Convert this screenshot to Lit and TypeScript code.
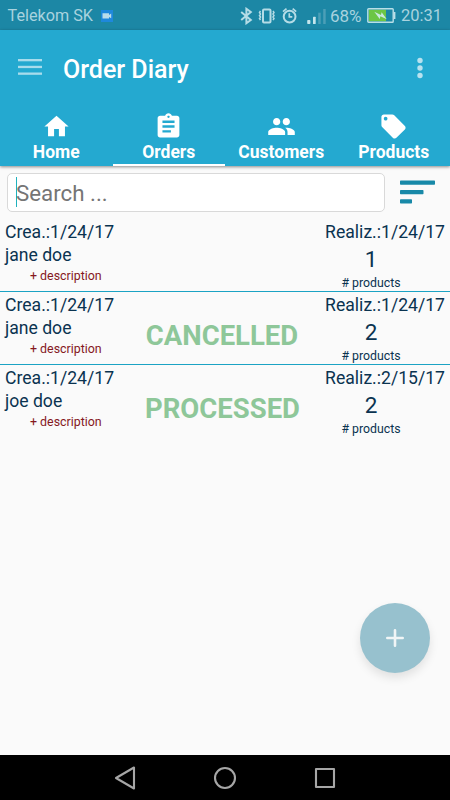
import { LitElement, html, css, svg, nothing } from "lit";
import { customElement, property } from "lit/decorators.js";
import { classMap } from "lit/directives/class-map.js";

interface Order {
  created: string;
  customer: string;
  due: string;
  products: number;
  status?: string;
}

const ORDERS: Order[] = [
  { created: "1/24/17", customer: "jane doe", due: "1/24/17", products: 1 },
  { created: "1/24/17", customer: "jane doe", due: "1/24/17", products: 2, status: "CANCELLED" },
  { created: "1/24/17", customer: "joe doe", due: "2/15/17", products: 2, status: "PROCESSED" },
];

const TABS = [
  { label: "Home", icon: "M10 20v-6h4v6h5v-8h3L12 3 2 12h3v8z" },
  {
    label: "Orders",
    icon: "M19 3h-4.180C14.400 1.840 13.300 1 12 1c-1.300 0-2.400.84-2.820 2H5c-1.100 0-2 .9-2 2v14c0 1.100.9 2 2 2h14c1.100 0 2-.9 2-2V5c0-1.100-.9-2-2-2zm-7 0c.55 0 1 .45 1 1s-.45 1-1 1-1-.45-1-1 .45-1 1-1zm2 14H7v-2h7v2zm3-4H7v-2h10v2zm0-4H7V7h10v2z",
  },
  {
    label: "Customers",
    icon: "M16 11c1.660 0 2.990-1.340 2.990-3S17.660 5 16 5c-1.660 0-3 1.340-3 3s1.340 3 3 3zm-8 0c1.660 0 2.990-1.340 2.990-3S9.660 5 8 5C6.340 5 5 6.340 5 8s1.340 3 3 3zm0 2c-2.330 0-7 1.170-7 3.500V19h14v-2.500c0-2.330-4.670-3.500-7-3.500zm8 0c-.29 0-.62.02-.97.05 1.160.84 1.970 1.970 1.970 3.450V19h6v-2.500c0-2.330-4.670-3.500-7-3.500z",
  },
  {
    label: "Products",
    icon: "M21.410 11.580l-9-9C12.050 2.220 11.550 2 11 2H4c-1.100 0-2 .9-2 2v7c0 .55.22 1.050.59 1.420l9 9c.36.36.86.58 1.410.58.55 0 1.050-.22 1.410-.59l7-7c.37-.36.59-.86.59-1.410 0-.55-.23-1.060-.59-1.420zM5.500 7C4.670 7 4 6.330 4 5.500S4.670 4 5.500 4 7 4.670 7 5.500 6.330 7 5.500 7z",
  },
];

@customElement("status-bar")
class StatusBar extends LitElement {
  static styles = css`
    :host {
      display: flex;
      align-items: center;
      height: 30px;
      box-sizing: border-box;
      padding: 1px 8px 0 7.500px;
      background: #1c87a5;
      color: #a9d3df;
      font-size: 16.500px;
      line-height: 30px;
    }
    .carrier { width: 86px; font-size: 16.200px; white-space: nowrap; }
    .camera { margin-left: 7px; }
    .icons { margin-left: auto; }
    .level { width: 33px; margin-left: 4px; font-size: 17px; white-space: nowrap; }
    .battery { margin-left: 4px; }
    .time { width: 41px; margin-left: 5px; white-space: nowrap; }
    svg { display: block; flex: none; }
  `;

  render() {
    return html`
      <span class="carrier">Telekom SK</span>
      <svg class="camera" width="12" height="12" viewBox="0 0 12 12">
        <rect width="12" height="12" fill="#1e88dc" />
        <path d="M1.500 3.200h6.500v1.800l2.200-1.500v4.800L8 6.900v1.700H1.500z" fill="#b9dcea" />
      </svg>
      <svg class="icons" width="86" height="18" viewBox="0 0 86 18" fill="none" stroke="#b5dce6" stroke-width="2">
        <path d="M1.200 5l9.600 8-4.400 3.200V1.800L10.800 5l-9.600 8" />
        <rect x="23" y="2.500" width="7.500" height="13" rx="1" />
        <path d="M20.500 4l-1 1.500 1 1.500-1 1.500 1 1.500-1 1.500 1 1.500M33 4l1 1.500-1 1.500 1 1.500-1 1.500 1 1.500-1 1.500" stroke-width="1.500" />
        <circle cx="49.600" cy="9.600" r="5.900" />
        <path d="M49.300 6.300v3.500h3M43 4.600l3.500-3M56.200 4.600l-3.500-3" stroke-width="1.700" />
        <g stroke="none" fill="#c5e5ec">
          <rect x="67.200" y="13" width="3.200" height="4" rx=".8" />
          <rect x="73" y="9.700" width="2.700" height="7.300" rx=".6" />
          <rect x="78.200" y="5.700" width="2.500" height="11.300" fill="#4b9fb7" />
          <rect x="83.200" y="2" width="2.500" height="15" fill="#4b9fb7" />
        </g>
      </svg>
      <span class="level">68%</span>
      <svg class="battery" width="29" height="15" viewBox="0 0 29 15">
        <rect x="1.700" y="1.700" width="17.300" height="11.600" fill="#6cc644" />
        <rect x=".8" y=".8" width="25.400" height="13.400" rx=".8" fill="none" stroke="#b9dfe8" stroke-width="1.400" />
        <rect x="26.600" y="4" width="1.800" height="7" fill="#b9dfe8" />
        <path d="M7.300 3.700l6.700 3.200.6-2.700 5.200 7-6.400-3-.7 2.700z" fill="#c9e9df" />
      </svg>
      <span class="time">20:31</span>
    `;
  }
}

@customElement("order-row")
class OrderRow extends LitElement {
  @property({ attribute: false }) order!: Order;

  static styles = css`
    :host {
      display: grid;
      grid-template-columns: 140px 154px 146px;
      height: 73px;
      box-sizing: border-box;
      color: #0a3350;
      padding: 2px 5px 0;
    }
    .main { font-size: 17.600px; line-height: 24px; white-space: nowrap; }
    .name { line-height: 22px; }
    .note { padding-left: 25px; font-size: 12.400px; line-height: 18px; color: #85181d; margin-top: 1px; }
    .status {
      text-align: center;
      font-size: 27.500px;
      line-height: 32px;
      font-weight: 700;
      color: #8ec799;
      padding-top: 27px;
    }
    .right { display: flex; flex-direction: column; align-items: flex-end; }
    .meta { width: 148px; display: flex; flex-direction: column; align-items: center; }
    .count { font-size: 22.500px; line-height: 28px; margin-top: 1px; }
    .unit { font-size: 12.300px; line-height: 18px; margin-top: 1px; }
  `;

  render() {
    const o = this.order;
    return html`
      <div>
        <div class="main">Crea.:${o.created}</div>
        <div class="main name">${o.customer}</div>
        <div class="note">+ description</div>
      </div>
      <div class="status">${o.status ?? nothing}</div>
      <div class="right">
        <div class="main">Realiz.:${o.due}</div>
        <div class="meta">
          <div class="count">${o.products}</div>
          <div class="unit"># products</div>
        </div>
      </div>
    `;
  }
}

@customElement("app-root")
class AppRoot extends LitElement {
  static styles = css`
    :host {
      display: flex;
      flex-direction: column;
      position: relative;
      width: 450px;
      height: 800px;
      overflow: hidden;
      background: #fafafa;
      font-family: Roboto, "Liberation Sans", sans-serif;
    }
    svg { display: block; flex: none; }
    .header { background: #24a9d0; height: 136px; box-shadow: 0 1px 3px rgba(0, 0, 0, 0.45); }
    .bar { display: flex; align-items: center; height: 78px; padding: 0 18px; box-sizing: border-box; }
    .menu { margin-top: -4px; }
    .more { margin-top: -3px; }
    .title { margin-left: 21px; flex: 1; color: #fff; font-size: 25px; font-weight: 500; }
    .tabs { display: grid; grid-template-columns: repeat(4, 1fr); height: 58px; }
    .tab {
      display: flex;
      flex-direction: column;
      align-items: center;
      box-sizing: border-box;
      padding-top: 4px;
      color: #fff;
      font-size: 17.500px;
      line-height: 23px;
      font-weight: 700;
      border-bottom: 2px solid transparent;
    }
    .tab.active { border-bottom-color: #fff; }
    .search { display: flex; align-items: center; height: 52px; padding: 0 15px 0 7px; }
    .field {
      display: flex;
      align-items: center;
      width: 378px;
      height: 39px;
      box-sizing: border-box;
      border: 1.500px solid #d9d9d9;
      border-radius: 5px;
      background: #fff;
      padding-left: 8px;
      color: #757575;
      font-size: 22.300px;
    }
    .hint { padding-top: 2px; }
    .caret { width: 1px; height: 30px; background: #20b2bd; margin-right: -1px; }
    .sort { margin-left: auto; }
    .list { flex: 1; }
    .item + .item { border-top: 1px solid #1ba3c4; padding-top: 1px; }
    .fab {
      position: absolute;
      left: 360px;
      top: 602.500px;
      width: 70px;
      height: 70px;
      border-radius: 50%;
      background: #97c1ce;
      box-shadow: 0 5px 10px rgba(0, 0, 0, 0.1);
      display: grid;
      place-items: center;
    }
    .nav { height: 45px; background: #000; display: flex; justify-content: center; align-items: center; }
  `;

  render() {
    return html`
      <status-bar></status-bar>
      <div class="header">
        <div class="bar">
          <svg class="menu" width="24" height="18" viewBox="0 0 24 18" fill="#a8dcec">
            <rect y="1" width="24" height="2.300" /><rect y="7.800" width="24" height="2.300" /><rect y="14.500" width="24" height="2.300" />
          </svg>
          <div class="title">Order Diary</div>
          <svg class="more" width="24" height="24" viewBox="0 0 24 24" fill="#b8e2ef">
            <circle cx="12" cy="4.500" r="2.700" /><circle cx="12" cy="12" r="2.700" /><circle cx="12" cy="19.500" r="2.700" />
          </svg>
        </div>
        <div class="tabs">
          ${TABS.map(
            (t, i) => html`
              <div class=${classMap({ tab: true, active: i === 1 })}>
                <svg width="29" height="29" viewBox="0 0 24 24" fill="#fff">${svg`<path d=${t.icon} />`}</svg>
                <span>${t.label}</span>
              </div>
            `,
          )}
        </div>
      </div>
      <div class="search">
        <div class="field"><span class="caret"></span><span class="hint">Search ...</span></div>
        <svg class="sort" width="35" height="24" viewBox="0 0 35 24" fill="#1889a8">
          <rect y=".6" width="35" height="4.200" rx=".7" />
          <rect y="10" width="23.500" height="4.200" rx=".7" />
          <rect y="19.200" width="12" height="4.200" rx=".7" />
        </svg>
      </div>
      <div class="list">${ORDERS.map((o) => html`<order-row class="item" .order=${o}></order-row>`)}</div>
      <div class="fab">
        <svg width="18" height="18" viewBox="0 0 18 18" stroke="#f0f5f6" stroke-width="2.600" stroke-linecap="round">
          <path d="M9 1.300v15.400M1.300 9h15.400" />
        </svg>
      </div>
      <div class="nav">
        <svg width="230" height="24" viewBox="0 0 230 24" fill="none" stroke="#a6a6a6" stroke-width="2.100" stroke-linejoin="round">
          <path d="M24 1.500v21L6 12z" />
          <circle cx="115" cy="12" r="10" />
          <rect x="206" y="3" width="18" height="18" />
        </svg>
      </div>
    `;
  }
}
